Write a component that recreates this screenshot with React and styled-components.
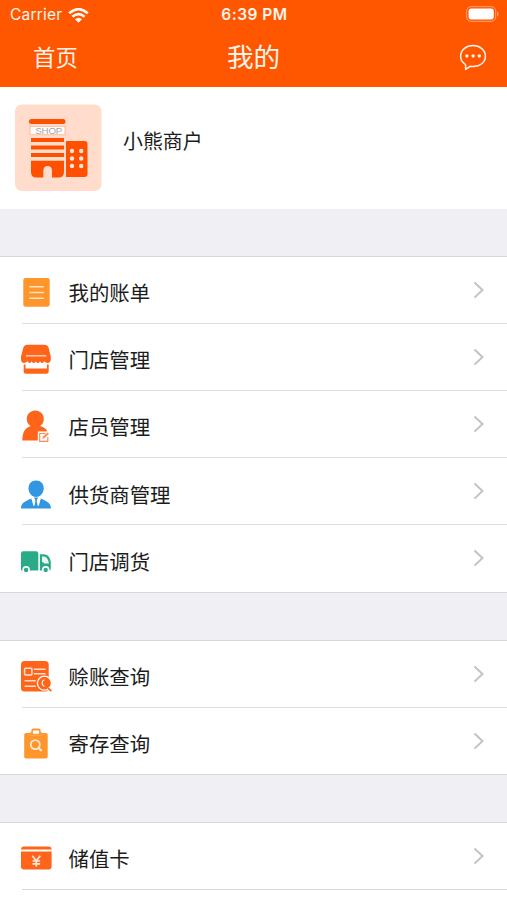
import styled, { createGlobalStyle } from 'styled-components'

const GlobalStyle = createGlobalStyle`
  * {
    box-sizing: border-box;
  }

  body {
    margin: 0;
    background: #fff;
    color: #1c1c1c;
    font-family: 'Noto Sans CJK SC', sans-serif;
    overflow: hidden;
  }

  svg {
    display: block;
    flex: none;
  }
`

const Screen = styled.div`
  width: 507px;
  height: 900px;
  overflow: hidden;
  background: #fff;
`

const Header = styled.header`
  height: 87px;
  background: #ff5600;
  color: #fff4ec;
`

const StatusBar = styled.div`
  display: grid;
  grid-template-columns: 1fr auto 1fr;
  align-items: center;
  height: 30px;
  padding: 0 8px 0 10px;
  font-family: Inter, sans-serif;
  font-size: 15.5px;
  line-height: 30px;
`

const Carrier = styled.div`
  display: flex;
  align-items: center;
  gap: 6px;
  letter-spacing: 0.2px;
`

const Clock = styled.div`
  font-weight: 600;
  letter-spacing: 0.5px;
`

const BatterySlot = styled.div`
  display: flex;
  justify-content: flex-end;
  padding-bottom: 2px;
`

const NavBar = styled.nav`
  display: grid;
  grid-template-columns: 1fr auto 1fr;
  align-items: center;
  height: 54px;
  padding: 0 20px;
`

const NavLink = styled.span`
  padding: 0 0 2px 13px;
  font-size: 22.4px;
  line-height: 30px;
`

const NavTitle = styled.h1`
  margin: 0 0 3px;
  font-size: 26.6px;
  font-weight: 400;
  line-height: 36px;
`

const NavAction = styled.span`
  display: flex;
  justify-content: flex-end;
`

const Profile = styled.section`
  display: flex;
  gap: 21px;
  height: 122px;
  padding: 17px 15px 0;
`

const ShopName = styled.div`
  padding-top: 22px;
  font-size: 19.9px;
  line-height: 30px;
`

const Group = styled.section`
  border-top: ${(props) => (props.$first ? '47px' : '48px')} solid #efeff4;
`

const Row = styled.div`
  position: relative;
  display: flex;
  align-items: center;
  height: 67.2px;
  padding: 5px 22px 0 20px;

  &::before {
    content: '';
    position: absolute;
    top: -0.4px;
    left: 22px;
    right: 0;
    height: 1px;
    background: #dedee0;
  }

  &:first-child::before {
    left: 0;
    background: #d8d8dc;
  }

  &:last-child::after {
    content: '';
    position: absolute;
    bottom: ${(props) => (props.$open ? '0' : '-0.6px')};
    left: ${(props) => (props.$open ? '22px' : '0')};
    right: 0;
    height: 1px;
    background: #d8d8dc;
  }
`

const RowLabel = styled.span`
  flex: 1;
  margin-left: 16.5px;
  font-size: 20.4px;
  line-height: 30px;
`

const ArrowSlot = styled.span`
  margin-bottom: 5px;
`

const WifiIcon = () => (
  <svg width="21" height="15" viewBox="0 0 21 15" fill="none" stroke="#fff8f2" strokeWidth="2.7">
    <path d="M1.2 5.2Q10.5 -2.8 19.8 5.2" />
    <path d="M4.4 8.7Q10.5 3.5 16.6 8.7" />
    <path d="M10.5 14.8L6.9 11.2Q10.5 8.2 14.1 11.2Z" fill="#fff8f2" stroke="none" />
  </svg>
)

const BatteryIcon = () => (
  <svg width="33" height="16" viewBox="0 0 33 16">
    <rect x="0.7" y="0.7" width="29" height="14.6" rx="4.3" fill="none" stroke="#ffa473" strokeWidth="1" />
    <rect x="2.6" y="2.6" width="25.2" height="10.8" rx="2.6" fill="#fff" />
    <path d="M31 5.6Q32.6 6.2 32.6 8T31 10.4Z" fill="#ffa473" />
  </svg>
)

const ChatIcon = () => (
  <svg width="28" height="28" viewBox="0 0 28 28">
    <path
      d="M6.5 21.6C3.2 19.5 1.6 16.6 1.6 13.3C1.6 7.2 7.1 2.6 14 2.6S26.4 7.2 26.4 13.3S20.9 23.6 14 23.6C12.9 23.6 12 23.5 11.1 23.3L6.7 26.4Z"
      fill="none"
      stroke="#fff4ec"
      strokeWidth="1.5"
      strokeLinejoin="round"
    />
    <g fill="#fff4ec">
      <rect x="6.4" y="11.4" width="3" height="3" rx="0.8" />
      <rect x="12.6" y="11.4" width="3" height="3" rx="0.8" />
      <rect x="18.8" y="11.4" width="3" height="3" rx="0.8" />
    </g>
  </svg>
)

const ShopAvatar = () => (
  <svg width="87" height="87" viewBox="0 0 87 87">
    <rect y="0.5" width="86.5" height="86.5" rx="7" fill="#ffdccb" />
    <g fill="#ff5000">
      <rect x="14" y="15" width="36.5" height="5" rx="2.5" />
      <rect x="16" y="34" width="33" height="4" />
      <rect x="16" y="41.5" width="33" height="4" />
      <rect x="16" y="49" width="33" height="4" />
      <path d="M16 56.8H49V68Q49 73.5 43.5 73.5H37V67Q37 62 32.7 62T28.3 67V73.5H21.5Q16 73.5 16 68Z" />
      <path d="M51 37H69.5Q72.5 37 72.5 40V70Q72.5 73 69.5 73H51Z" />
    </g>
    <rect x="15" y="22.3" width="35" height="8.5" fill="#fff" stroke="#ffad8a" strokeWidth="0.8" />
    <text x="20.3" y="30.1" textLength="27" fontFamily="Liberation Sans, sans-serif" fontSize="9.8" fill="#a9a5a5">
      SHOP
    </text>
    <g fill="#ffe6d9">
      {[47, 54.5, 62].map((y) => (
        <g key={y}>
          <circle cx="57" cy={y} r="2.2" />
          <circle cx="66.2" cy={y} r="2.2" />
        </g>
      ))}
    </g>
  </svg>
)

const ArrowIcon = () => (
  <svg width="12" height="18" viewBox="0 0 12 18">
    <path d="M1.5 1.4L9.5 9L1.5 16.6" fill="none" stroke="#c3c3c5" strokeWidth="2" />
  </svg>
)

const RowIcon = ({ children }) => (
  <svg width="32" height="32" viewBox="0 0 32 32">
    {children}
  </svg>
)

const BillIcon = () => (
  <RowIcon>
    <rect x="3.3" y="2" width="26.4" height="28.8" rx="2.2" fill="#fe962c" />
    <path d="M9.3 10.7H23.8M9.3 16.5H23.8M9.3 22.3H23.8" stroke="#ffe3c2" strokeWidth="1.6" />
  </RowIcon>
)

const StoreIcon = () => (
  <RowIcon>
    <path
      d="M7.5 1.8H24.3Q27.6 1.8 28.6 4.8L30.8 13.4V17Q30.2 20 27.6 20Q25.5 20 24.4 18.2Q22.4 21.6 20 18.4Q18 21.6 15.8 18.4Q13.8 21.6 11.6 18.4Q9.4 21.6 7.3 18.2Q6.2 20 4.1 20Q1.4 20 1 17V13.4L3.3 4.8Q4.2 1.8 7.5 1.8Z"
      fill="#ff651a"
    />
    <path d="M6 12.8H26.3" stroke="#ffc4a3" strokeWidth="1.7" />
    <path d="M3.7 21.6H5.5V25.6H26.9V21.6H28.7V28.3Q28.7 30.8 26.2 30.8H6.2Q3.7 30.8 3.7 28.3Z" fill="#ff651a" />
  </RowIcon>
)

const ClerkIcon = () => (
  <RowIcon>
    <path
      d="M15.3 0.6C20.2 0.6 23.8 4.2 23.8 8.9C23.8 12 22.3 14.4 20 16.1C24.7 17.4 27.5 19.7 27.9 24V30.6H2.3C2.4 22.7 4.6 18.3 10.7 16.1C8.3 14.4 6.8 12 6.8 8.9C6.8 4.2 10.4 0.6 15.3 0.6Z"
      fill="#ff651a"
    />
    <rect x="17.8" y="21.4" width="13" height="10.6" fill="#fff" />
    <path d="M25.4 23.5H19.7V31.3H27.8V27.2" fill="none" stroke="#ff8b52" strokeWidth="1.2" />
    <path d="M22.2 29L23 26.6L27.6 22.4L29 23.8L24.6 28.1Z" fill="#ff8b52" />
  </RowIcon>
)

const SupplierIcon = () => (
  <RowIcon>
    <path d="M16.1 2.4C20.8 2.4 23.7 5.6 23.7 10.2C23.7 14.8 20.6 19 16.1 19S8.5 14.8 8.5 10.2C8.5 5.6 11.4 2.4 16.1 2.4Z" fill="#3197e2" />
    <path d="M1 30.4C1.2 25.5 3 24 11.3 20.4L14.4 27.8L15.3 22.8H16.9L17.8 27.8L20.8 20.4C28.8 24 30.8 25.5 31 30.4Z" fill="#3197e2" />
    <path d="M14 19.4H18.2L17 21.5L18.2 28L16.1 30.1L14 28L15.2 21.5Z" fill="#3197e2" />
    <path d="M12.2 21L13.9 27.6L15 22.6M20 21L18.3 27.6L17.2 22.6" fill="none" stroke="#fff" strokeWidth="1.1" />
  </RowIcon>
)

const TruckIcon = () => (
  <RowIcon>
    <path d="M3.2 6.2H16.1Q18.3 6.2 18.3 8.4V25.6H1V8.4Q1 6.2 3.2 6.2Z" fill="#2aab88" />
    <path d="M19.9 9.2H23.8C28.2 9.2 30.8 13.5 30.8 18V23.7Q30.8 25.6 28.8 25.6H19.9Z" fill="#2aab88" />
    <path d="M22 11.4H24C27 12 28.6 15.1 28.9 18.6H24.6L22 16.8Z" fill="#e6f6f1" />
    <circle cx="6.1" cy="24.9" r="3.8" fill="#fff" />
    <circle cx="25.7" cy="24.9" r="3.8" fill="#fff" />
    <circle cx="6.1" cy="24.9" r="2.2" fill="#2aab88" />
    <circle cx="25.7" cy="24.9" r="2.2" fill="#2aab88" />
  </RowIcon>
)

const CreditIcon = () => (
  <RowIcon>
    <rect x="1" y="1" width="27.7" height="30.4" rx="3.5" fill="#ff651a" />
    <g fill="none" stroke="#ffe0cf" strokeWidth="1.6">
      <rect x="4.6" y="8.3" width="7.3" height="6.7" rx="1" />
      <path d="M13.8 9.3H25.6M13.8 13.8H25.6M4.6 20.8H15.8M4.6 26.2H15.8" />
    </g>
    <circle cx="24.4" cy="23.2" r="7" fill="#ff651a" stroke="#fff" strokeWidth="1.3" />
    <path d="M28 28L31.3 31.2" stroke="#fff" strokeWidth="4" />
    <path d="M28 28L31.3 31.2" stroke="#ff651a" strokeWidth="1.8" />
    <path d="M24.4 19.8A3.5 3.5 0 0 0 24.4 26.4" fill="none" stroke="#fff" strokeWidth="1.2" />
  </RowIcon>
)

const DepositIcon = () => (
  <RowIcon>
    <rect x="4.2" y="6.1" width="23.5" height="25.4" rx="1.8" fill="#fe962c" />
    <path d="M9.6 8V5.6H11.3V3.7Q11.3 1.5 13.5 1.5H18.5Q20.7 1.5 20.7 3.7V5.6H22.4V8Z" fill="#fe962c" />
    <path d="M9.7 7.2V8.2H22.3V7.2" fill="none" stroke="#ffb566" strokeWidth="0.8" />
    <rect x="12.9" y="3.5" width="6.2" height="3.2" rx="0.6" fill="#fff" />
    <circle cx="15.3" cy="17.6" r="4.5" fill="none" stroke="#ffe9d1" strokeWidth="1.8" />
    <path d="M18.5 20.8L21.7 24" stroke="#ffe9d1" strokeWidth="2" />
  </RowIcon>
)

const CardIcon = () => (
  <RowIcon>
    <path d="M4 4.6H28.6Q31.6 4.6 31.6 7.6H1Q1 4.6 4 4.6Z" fill="#ff651a" />
    <path d="M1 9.4H31.6V24.6Q31.6 27.6 28.6 27.6H4Q1 27.6 1 24.6Z" fill="#ff651a" />
    <path d="M12.3 13.8L16.3 18.8L20.3 13.8M16.3 18.8V24.5M12.5 19H20.1M12.5 21.8H20.1" fill="none" stroke="#ffe9dd" strokeWidth="1.7" />
  </RowIcon>
)

const groups = [
  [
    { label: '我的账单', Icon: BillIcon },
    { label: '门店管理', Icon: StoreIcon },
    { label: '店员管理', Icon: ClerkIcon },
    { label: '供货商管理', Icon: SupplierIcon },
    { label: '门店调货', Icon: TruckIcon },
  ],
  [
    { label: '赊账查询', Icon: CreditIcon },
    { label: '寄存查询', Icon: DepositIcon },
  ],
  [{ label: '储值卡', Icon: CardIcon }],
]

function App() {
  return (
    <Screen>
      <GlobalStyle />
      <Header>
        <StatusBar>
          <Carrier>
            Carrier
            <WifiIcon />
          </Carrier>
          <Clock>6:39 PM</Clock>
          <BatterySlot>
            <BatteryIcon />
          </BatterySlot>
        </StatusBar>
        <NavBar>
          <NavLink>首页</NavLink>
          <NavTitle>我的</NavTitle>
          <NavAction>
            <ChatIcon />
          </NavAction>
        </NavBar>
      </Header>

      <Profile>
        <ShopAvatar />
        <ShopName>小熊商户</ShopName>
      </Profile>

      {groups.map((items, index) => (
        <Group key={index} $first={index === 0}>
          {items.map(({ label, Icon }) => (
            <Row key={label} $open={index === groups.length - 1}>
              <Icon />
              <RowLabel>{label}</RowLabel>
              <ArrowSlot>
                <ArrowIcon />
              </ArrowSlot>
            </Row>
          ))}
        </Group>
      ))}
    </Screen>
  )
}

export default App
